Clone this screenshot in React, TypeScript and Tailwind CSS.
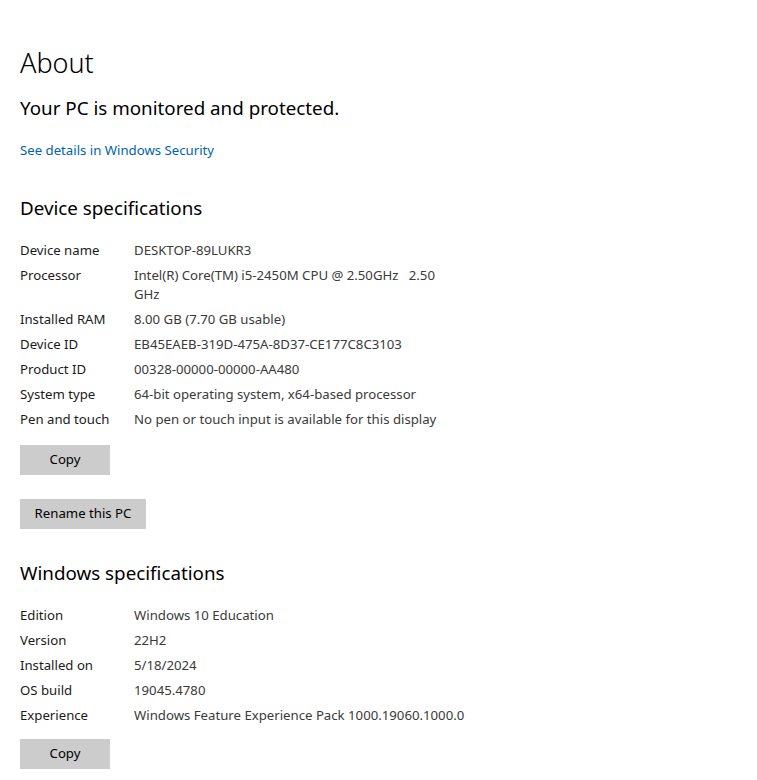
const deviceSpecs: [string, string][] = [
  ["Device name", "DESKTOP-89LUKR3"],
  ["Processor", "Intel(R) Core(TM) i5-2450M CPU @ 2.50GHz   2.50 GHz"],
  ["Installed RAM", "8.00 GB (7.70 GB usable)"],
  ["Device ID", "EB45EAEB-319D-475A-8D37-CE177C8C3103"],
  ["Product ID", "00328-00000-00000-AA480"],
  ["System type", "64-bit operating system, x64-based processor"],
  ["Pen and touch", "No pen or touch input is available for this display"],
];

const windowsSpecs: [string, string][] = [
  ["Edition", "Windows 10 Education"],
  ["Version", "22H2"],
  ["Installed on", "5/18/2024"],
  ["OS build", "19045.4780"],
  ["Experience", "Windows Feature Experience Pack 1000.19060.1000.0"],
];

function SpecTable({ rows, valueWidth }: { rows: [string, string][]; valueWidth: string }) {
  return (
    <div className="flex flex-col gap-[6px]">
      {rows.map(([label, value]) => (
        <div key={label} className="flex text-[13.2px] leading-[19px]">
          <div className="w-[114px] shrink-0 text-[#1a1a1a]">{label}</div>
          <div className={`${valueWidth} whitespace-pre-wrap text-[#3a3a3a]`}>{value}</div>
        </div>
      ))}
    </div>
  );
}

function GrayButton({ children, width }: { children: string; width: string }) {
  return (
    <button className={`h-[30px] ${width} bg-[#cccccc] text-[13.2px] text-black`}>{children}</button>
  );
}

export default function App() {
  return (
    <div
      className="min-h-[780px] bg-white pl-[20px] pt-[43px]"
      style={{ fontFamily: '"Segoe UI", "Noto Sans", sans-serif' }}
    >
      {/* Header */}
      <h1 className="text-[27px] leading-[40px] font-light text-black">About</h1>
      <p className="mt-[11px] text-[18.8px] leading-[28px] text-black">Your PC is monitored and protected.</p>
      <a className="mt-[19px] block text-[13.2px] leading-[19px] text-[#0063b1]">See details in Windows Security</a>

      {/* Device specifications */}
      <h2 className="mt-[34px] text-[18.8px] leading-[28px] text-black">Device specifications</h2>
      <div className="mt-[19px]">
        <SpecTable rows={deviceSpecs} valueWidth="w-[318px]" />
      </div>
      <div className="mt-[16px]">
        <GrayButton width="w-[90px]">Copy</GrayButton>
      </div>
      <div className="mt-[24px]">
        <GrayButton width="w-[126px]">Rename this PC</GrayButton>
      </div>

      {/* Windows specifications */}
      <h2 className="mt-[30px] text-[18.8px] leading-[28px] text-black">Windows specifications</h2>
      <div className="mt-[19px]">
        <SpecTable rows={windowsSpecs} valueWidth="w-[360px]" />
      </div>
      <div className="mt-[14px]">
        <GrayButton width="w-[90px]">Copy</GrayButton>
      </div>
    </div>
  );
}
